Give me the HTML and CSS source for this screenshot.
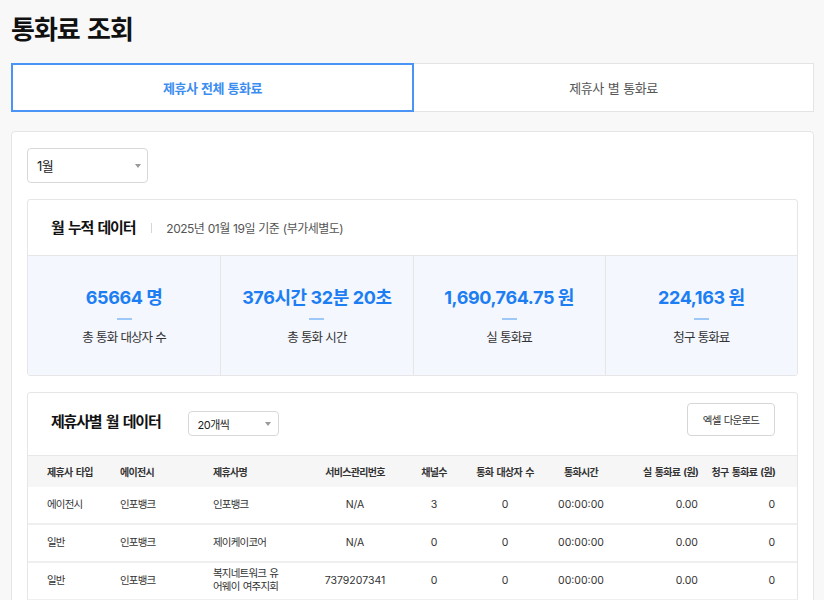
FILE: index.html
```html
<!DOCTYPE html>
<html lang="ko">
<head>
<meta charset="utf-8">
<title>통화료 조회</title>
<link rel="stylesheet" href="styles.css">
</head>
<body>
<h1 class="page-title">통화료 조회</h1>
<div class="tabs">
  <div class="tab active">제휴사 전체 통화료</div>
  <div class="tab">제휴사 별 통화료</div>
</div>
<section class="card">
  <div class="select month"><span>1월</span><i class="caret"></i></div>

  <div class="panel">
    <div class="panel-head">
      <h2>월 누적 데이터</h2>
      <span class="sep"></span>
      <span class="date">2025년 01월 19일 기준 (부가세별도)</span>
    </div>
    <div class="stats">
      <div class="stat"><div class="value">65664 명</div><div class="bar"></div><div class="label">총 통화 대상자 수</div></div>
      <div class="stat"><div class="value">376시간 32분 20초</div><div class="bar"></div><div class="label">총 통화 시간</div></div>
      <div class="stat"><div class="value">1,690,764.75 원</div><div class="bar"></div><div class="label">실 통화료</div></div>
      <div class="stat"><div class="value">224,163 원</div><div class="bar"></div><div class="label">청구 통화료</div></div>
    </div>
  </div>

  <div class="panel list">
    <div class="list-head">
      <h2>제휴사별 월 데이터</h2>
      <div class="select size"><span>20개씩</span><i class="caret"></i></div>
      <div class="excel">엑셀 다운로드</div>
    </div>
    <table class="grid">
      <colgroup>
        <col class="c1"><col class="c2"><col class="c3"><col class="c4"><col class="c5"><col class="c6"><col class="c7"><col class="c8"><col class="c9">
      </colgroup>
      <thead>
        <tr>
          <th class="l first">제휴사 타입</th>
          <th class="l">에이전시</th>
          <th class="l">제휴사명</th>
          <th>서비스관리번호</th>
          <th>채널수</th>
          <th>통화 대상자 수</th>
          <th>통화시간</th>
          <th class="r">실 통화료 (원)</th>
          <th class="r last">청구 통화료 (원)</th>
        </tr>
      </thead>
      <tbody>
        <tr>
          <td class="l first k">에이전시</td>
          <td class="l k">인포뱅크</td>
          <td class="l k name">인포뱅크</td>
          <td>N/A</td>
          <td>3</td>
          <td>0</td>
          <td>00:00:00</td>
          <td class="r">0.00</td>
          <td class="r last">0</td>
        </tr>
        <tr>
          <td class="l first k">일반</td>
          <td class="l k">인포뱅크</td>
          <td class="l k name">제이케이코어</td>
          <td>N/A</td>
          <td>0</td>
          <td>0</td>
          <td>00:00:00</td>
          <td class="r">0.00</td>
          <td class="r last">0</td>
        </tr>
        <tr>
          <td class="l first k">일반</td>
          <td class="l k">인포뱅크</td>
          <td class="l k name">복지네트워크 유어웨이 여주지회</td>
          <td>7379207341</td>
          <td>0</td>
          <td>0</td>
          <td>00:00:00</td>
          <td class="r">0.00</td>
          <td class="r last">0</td>
        </tr>
      </tbody>
    </table>
  </div>
</section>
</body>
</html>
```

FILE: styles.css
```css
* { box-sizing: border-box; }

body {
  margin: 0;
  padding: 0 10px 40px 11px;
  background: #f8f8f8;
  font-family: Inter, "Noto Sans CJK KR", sans-serif;
  color: #222;
}

.page-title {
  margin: 0;
  padding-top: 10px;
  font-family: "Noto Sans CJK KR", sans-serif;
  font-size: 26px;
  line-height: 36px;
  font-weight: 700;
  letter-spacing: -1px;
  word-spacing: 1px;
  color: #111;
}

.tabs {
  display: flex;
  margin-top: 17px;
  height: 49px;
}

.tab {
  flex: 1;
  display: flex;
  align-items: center;
  justify-content: center;
  background: #fff;
  border: 1px solid #e4e4e4;
  border-left: none;
  font-size: 13px;
  letter-spacing: -0.5px;
  word-spacing: 1px;
  color: #555;
}

.tab.active {
  border: 2px solid #4a94f6;
  color: #3b8ef0;
  font-weight: 700;
}

.card {
  margin-top: 19px;
  background: #fff;
  border: 1px solid #e5e5e5;
  border-radius: 4px;
  padding: 16px 15px;
}

.select {
  display: flex;
  align-items: center;
  justify-content: space-between;
  background: #fff;
  border: 1px solid #d8d8d8;
  border-radius: 4px;
  color: #222;
}

.select.month {
  width: 121px;
  height: 35px;
  padding: 0 6px 0 9px;
  font-size: 13px;
  letter-spacing: -0.5px;
}

.caret {
  width: 0;
  height: 0;
  border-left: 3.5px solid transparent;
  border-right: 3.5px solid transparent;
  border-top: 4px solid #9a9a9a;
}

.panel {
  margin-top: 16px;
  border: 1px solid #e6e6e6;
  border-radius: 3px;
  overflow: hidden;
}

.panel-head {
  display: flex;
  align-items: center;
  height: 56px;
  padding-left: 23px;
  border-bottom: 1px solid #e6e6e6;
}

h2 {
  margin: 0;
  font-size: 15px;
  line-height: 24px;
  font-weight: 700;
  letter-spacing: -1.2px;
  word-spacing: 2px;
  color: #111;
}

.sep {
  width: 1px;
  height: 10px;
  background: #d5d5d5;
  margin: 0 14px 0 16px;
}

.date {
  font-size: 12px;
  letter-spacing: -0.5px;
  word-spacing: 0.5px;
  color: #555;
}

.stats {
  display: grid;
  grid-template-columns: repeat(4, 1fr);
  height: 119px;
  background: #f4f7fe;
}

.stat {
  display: flex;
  flex-direction: column;
  align-items: center;
  justify-content: center;
  border-left: 1px solid #e6e6e6;
}

.stat:first-child { border-left: none; }

.value {
  font-size: 18px;
  line-height: 24px;
  font-weight: 700;
  letter-spacing: -0.4px;
  color: #1c7ef2;
}

.bar {
  width: 15px;
  height: 2px;
  margin-top: 8px;
  background: #9ec8f8;
}

.label {
  margin-top: 9px;
  font-size: 12.5px;
  line-height: 17px;
  letter-spacing: -0.9px;
  word-spacing: 0.5px;
  color: #333;
}

.list-head {
  display: flex;
  align-items: flex-start;
  height: 62px;
  padding: 10px 22px 0 23px;
}

.list-head h2 { margin-top: 7px; }

.select.size {
  width: 91px;
  height: 25px;
  margin: 8px 0 0 27px;
  padding: 0 7px 0 9px;
  font-size: 11px;
  letter-spacing: -0.5px;
}

.excel {
  margin-left: auto;
  width: 88px;
  height: 33px;
  display: flex;
  align-items: center;
  justify-content: center;
  border: 1px solid #d6d6d6;
  border-radius: 4px;
  background: #fff;
  font-size: 10.5px;
  letter-spacing: -0.8px;
  word-spacing: 1px;
  color: #333;
}

.grid {
  width: 100%;
  table-layout: fixed;
  border-collapse: separate;
  border-spacing: 0;
}

.c1 { width: 84px; }
.c2 { width: 93px; }
.c3 { width: 96px; }
.c4 { width: 108px; }
.c5 { width: 50px; }
.c6 { width: 92px; }
.c7 { width: 60px; }
.c8 { width: 95px; }
.c9 { width: 91px; }

.grid th {
  height: 32px;
  padding: 0 4px;
  border-top: 1px solid #e8e8e8;
  background: #f6f6f6;
  font-size: 10px;
  font-weight: 700;
  letter-spacing: -0.7px;
  word-spacing: 1.5px;
  color: #333;
  text-align: center;
  white-space: nowrap;
}

.grid td {
  height: 38px;
  padding: 0 4px;
  border-bottom: 2px solid #efefef;
  font-size: 10.5px;
  line-height: 1.2;
  color: #333;
  text-align: center;
}

.grid td.k { letter-spacing: -0.8px; word-spacing: 1px; }

.grid .l { text-align: left; padding-left: 8px; padding-right: 14px; }
.grid td.name { padding-right: 20px; }
.grid .r { text-align: right; padding-right: 8px; }
.grid .first { padding-left: 19px; }
.grid .last { padding-right: 22px; }
```
